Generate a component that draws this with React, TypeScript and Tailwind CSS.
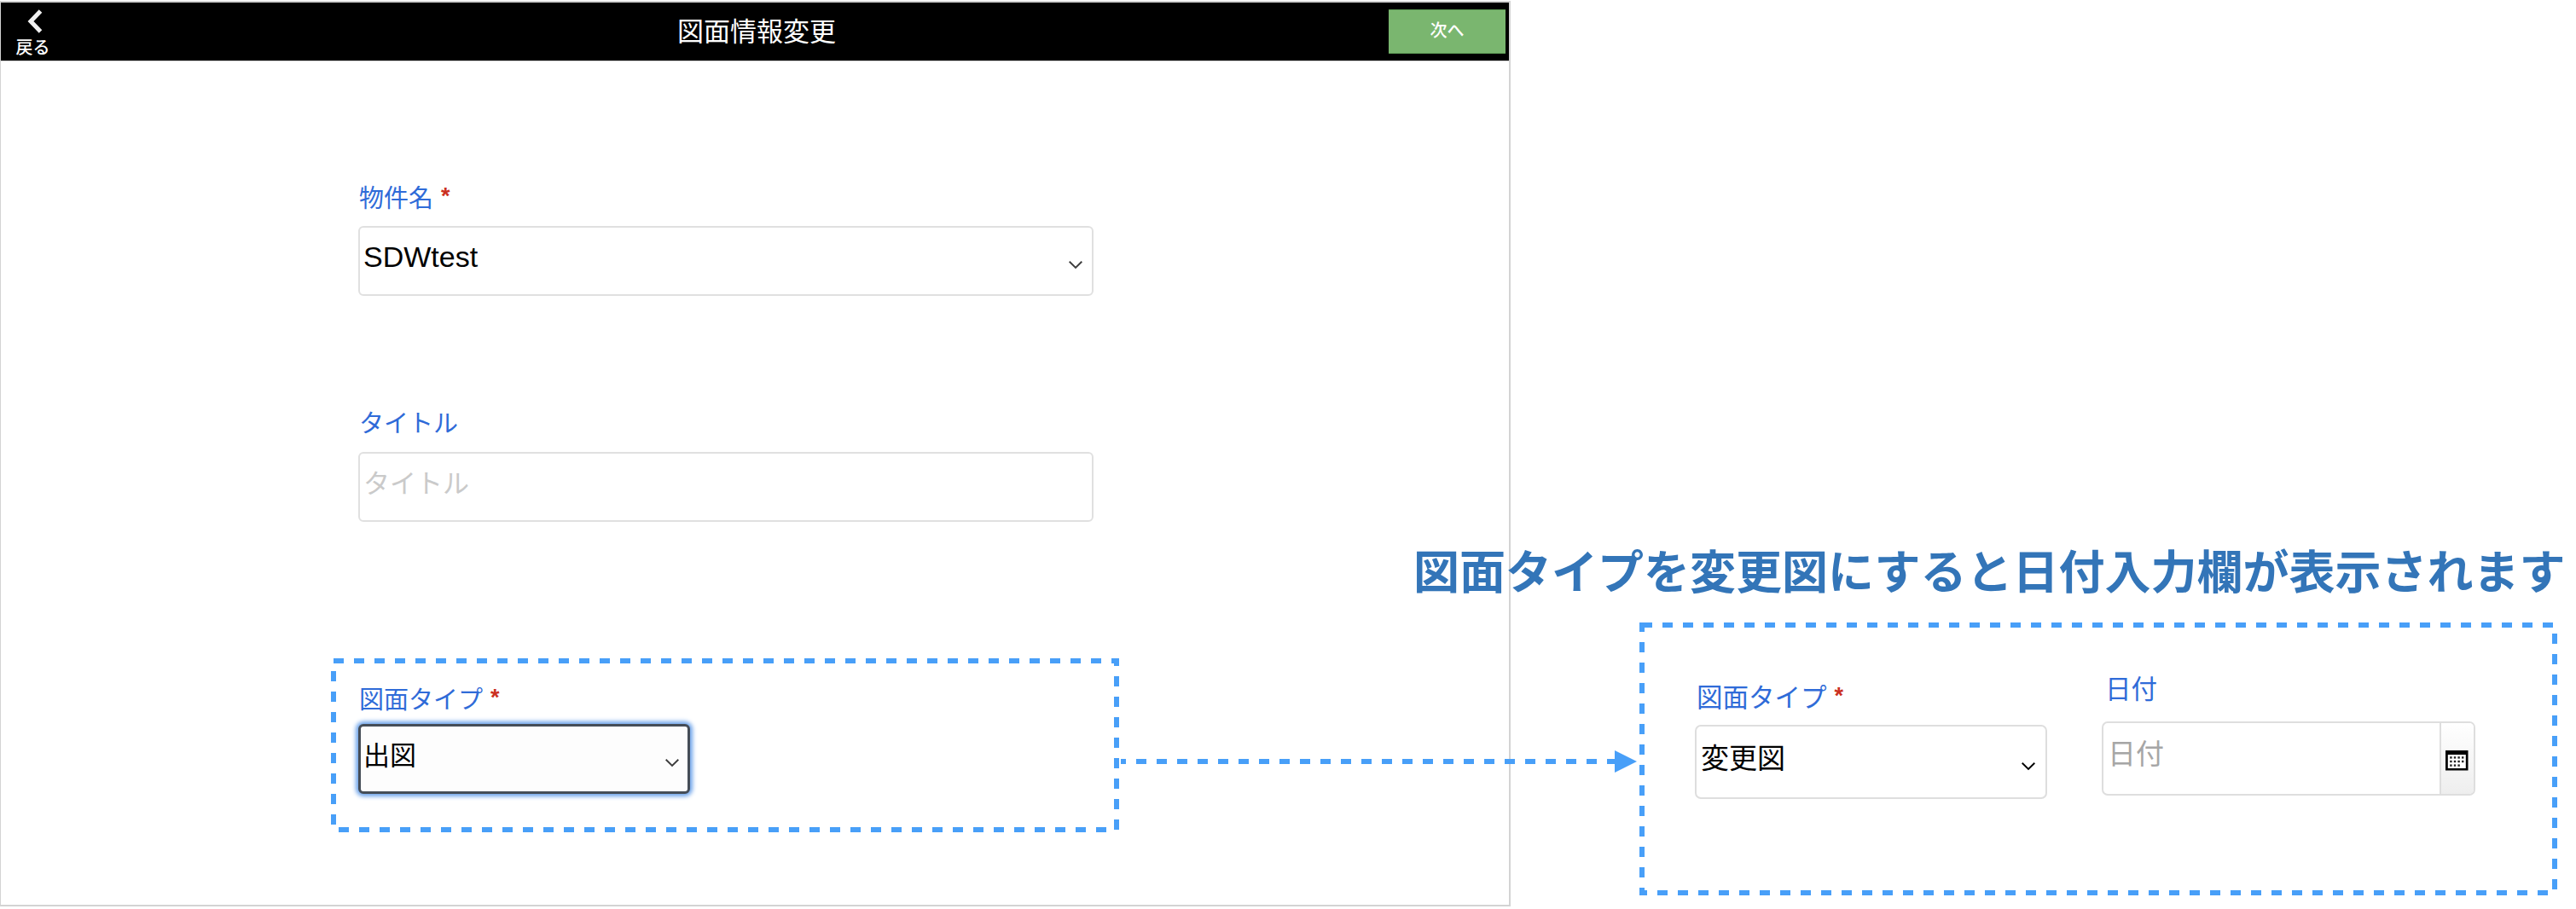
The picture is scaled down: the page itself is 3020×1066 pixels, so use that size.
import React from "react";

function Chevron({ className }: { className: string }) {
  return (
    <svg className={className} width="18" height="12" viewBox="0 0 18 12" fill="none" stroke="currentColor" strokeWidth="1.9">
      <path d="M1.700 1.800 9 9l7.300-7.200" />
    </svg>
  );
}

function CalendarIcon() {
  const dots = [0, 1, 2, 3, 4, 5, 6, 7, 8, 9, 10];
  return (
    <svg className="mt-[5px] mr-[2px]" width="27" height="24" viewBox="0 0 27 24">
      <rect width="26.500" height="23.500" fill="#000" />
      <rect x="2.800" y="5" width="21" height="16" fill="#fff" />
      {dots.map((i) => (
        <rect key={i} x={5.2 + (i % 4) * 4.6} y={7.2 + Math.floor(i / 4) * 4.6} width="2.400" height="2.400" fill="#222" />
      ))}
    </svg>
  );
}

/* Dashed outline laid over the fields it highlights. */
function DashedFrame({ width, height }: { width: number; height: number }) {
  return (
    <svg className="pointer-events-none absolute inset-0" width={width} height={height} fill="none">
      <rect x="3" y="3" width={width - 6} height={height - 6} stroke="#489ff8" strokeWidth="6" strokeDasharray="12 12" />
    </svg>
  );
}

function Label({ children, required, className = "pl-px text-[29px]" }: { children: React.ReactNode; required?: boolean; className?: string }) {
  return (
    <div className={"flex h-[30px] items-start leading-[28px] text-[#2f6bd8] " + className}>
      <span>{children}</span>
      {required && <span className="ml-[9px] font-['Liberation_Sans'] text-[27px] font-bold text-[#cb2f20]">*</span>}
    </div>
  );
}

export default function App() {
  return (
    <main className="relative flex h-[1066px] w-[3020px] overflow-hidden bg-white font-['Noto_Sans_CJK_JP',sans-serif]">
      <section className="mt-px h-[1062px] w-[1771px] shrink-0 border-2 border-l border-[#d3d3d3]">
        <header className="grid h-[69px] grid-cols-[1fr_auto_1fr] border-b border-[#d3d3d3] bg-black text-white">
          <button className="flex w-[75px] flex-col items-center pt-[8px] text-left">
            <svg className="ml-[4px]" width="18" height="28" viewBox="0 0 18 28" fill="none" stroke="#f0f0f0" strokeWidth="5">
              <path d="M15.500 2 4 14l11.500 12" />
            </svg>
            <span className="mt-[6px] text-[20px] leading-[20px] font-medium">戻る</span>
          </button>
          <h1 className="pt-[16px] pl-[4px] text-[31px] leading-[31px]">図面情報変更</h1>
          <button className="mt-[8px] mr-[4px] h-[52px] w-[137px] justify-self-end border-y border-[#5f9c56] bg-[#7ab66f] pb-[5px] text-[20px] leading-[20px] font-medium">
            次へ
          </button>
        </header>

        <form className="pl-[419px]">
          <div className="pt-[144px]">
            <Label required>物件名</Label>
            <div className="mt-[19px] flex h-[82px] w-[862px] justify-between rounded-[6px] border-2 border-[#e0e0e0] pl-[4px]">
              <span className="pt-[17px] font-['Liberation_Sans'] text-[34px] leading-[34px] text-black">SDWtest</span>
              <Chevron className="mt-[38px] mr-[10px] text-[#3c3c3c]" />
            </div>
          </div>
          <div className="pt-[133px]">
            <Label>タイトル</Label>
            <div className="mt-[20px] h-[82px] w-[862px] rounded-[6px] border-2 border-[#e0e0e0] pt-[17px] pl-[4px] text-[31px] leading-[31px] text-[#cacaca]">
              タイトル
            </div>
          </div>
          <div className="relative mt-[160px] -ml-[32px] h-[204px] w-[924px] pt-[32px] pl-[32px]">
            <DashedFrame width={924} height={204} />
            <Label required>図面タイプ</Label>
            <div className="mt-[15px] flex h-[82px] w-[389px] justify-between rounded-[6px] border-[3px] border-[#454d57] bg-[#fdfdfd] pl-[3px] shadow-[0_0_5px_3px_#6ea4ea]">
              <span className="pt-[16px] text-[31px] leading-[31px] text-black">出図</span>
              <Chevron className="mt-[37px] mr-[9px] text-[#3c3c3c]" />
            </div>
          </div>
        </form>
      </section>

      {/* Connector between the two highlighted areas */}
      <svg className="absolute top-[880px] left-[1314px]" width="606" height="26" viewBox="0 0 606 26">
        <path d="M0 13H582" stroke="#489ff8" strokeWidth="6" strokeDasharray="12 12" strokeDashoffset="6" />
        <path d="M579 0 605 13 579 26Z" fill="#489ff8" />
      </svg>

      <aside className="relative -ml-[114px] pt-[641px]">
        <h2 className="text-[54px] leading-[54px] font-bold whitespace-nowrap text-[#3375b8]">
          図面タイプを変更図にすると日付入力欄が表示されます
        </h2>
        <div className="relative mt-[35px] ml-[265px] flex h-[320px] w-[1076px] pl-[65px]">
          <DashedFrame width={1076} height={320} />
          <div className="mt-[72px]">
            <Label required className="pl-[2px] text-[30.500px]">図面タイプ</Label>
            <div className="mt-[18px] flex h-[87px] w-[413px] justify-between rounded-[7px] border-2 border-[#dedede] pl-[5px]">
              <span className="pt-[19px] text-[33px] leading-[33px] text-black">変更図</span>
              <Chevron className="mt-[41px] mr-[11px] text-black" />
            </div>
          </div>
          <div className="mt-[62px] ml-[64px]">
            <Label className="pl-[4px] text-[30.500px]">日付</Label>
            <div className="mt-[24px] flex h-[87px] w-[438px] overflow-hidden rounded-[7px] border-2 border-[#dedede]">
              <span className="flex-1 pt-[18px] pl-[5px] text-[33px] leading-[33px] text-[#a6a6a6]">日付</span>
              <span className="flex w-[40px] items-center justify-center border-l-2 border-[#dedede] bg-linear-to-b from-white to-[#eeeeee]">
                <CalendarIcon />
              </span>
            </div>
          </div>
        </div>
      </aside>
    </main>
  );
}
